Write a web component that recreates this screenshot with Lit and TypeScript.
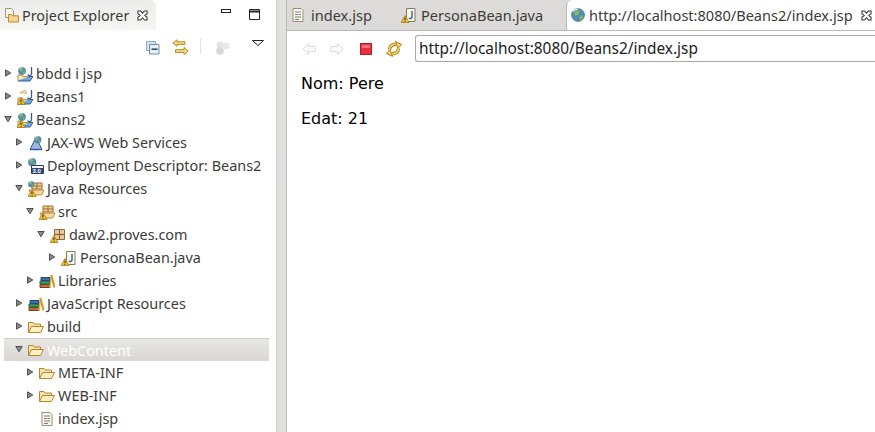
import { LitElement, html, css, svg } from "lit";
import { customElement } from "lit/decorators.js";

const warn = (x = 0, y = 8) => svg`<g transform="translate(${x} ${y})"><path d="M4 .5 8 7.500H0Z" fill="#f4c430" stroke="#a87a10" stroke-width=".8"/><path d="M4 2.600v2.600M4 5.900v.9" stroke="#222" stroke-width="1"/></g>`;
const globe = (x = 0, y = 0, s = 1) => svg`<g transform="translate(${x} ${y}) scale(${s})"><circle cx="5" cy="5" r="4.600" fill="#4d8fb5" stroke="#5a7f96" stroke-width=".6"/><path d="M2 3.200 4.400 1.400 6.400 2.600 5 5 3 5.600ZM6 6l2.400-1L8 8 6.400 8.600Z" fill="#8fb45a"/><path d="M1.600 2.400A4 4 0 0 1 5 .8" stroke="#e8f2f8" fill="none"/></g>`;
const openFolder = svg`<path d="M.5 13.500V3.500h4.500l1.200 1.500h6.300v3" fill="#fbe3a8" stroke="#b9852c"/><path d="M.5 13.500 3.500 7.500H15.500l-3 6Z" fill="#fdf0c8" stroke="#b9852c" stroke-linejoin="round"/>`;
const projectFolder = (blue = true) => svg`<path d="M1 15 4 10.500h12L13 15Z" fill="${blue ? "#6fa8dc" : "#fdeab8"}" stroke="${blue ? "#2f5f94" : "#b98b35"}"/><path d="M1 14.500V9h4l1 1.500h6" fill="#fdeab8" stroke="#b98b35"/><path d="M14.500 1v6.500a2 2 0 0 1-3.800 1" fill="none" stroke="#2f5f94" stroke-width="1.300"/>`;
const pkgBox = svg`<path d="M4 2h10v6H4Z" fill="#f2cf95" stroke="#9a6a2c"/><path d="M9 2v6M4 5h10" stroke="#9a6a2c"/><path d="M1 9h15l-2.500 5H3.500Z" fill="#f7d9a0" stroke="#b98b35"/>`;
const books = svg`<path d="M1 11.500h10v3H1Z" fill="#c9683a" stroke="#70401f"/><path d="M1 8h10v3H1Z" fill="#3f9a63" stroke="#24603b"/><path d="M2 4.500h9v3H2Z" fill="#3b6ea5" stroke="#234a73"/><path d="M12.200 2 15.600 14.500" stroke="#d99a1f" stroke-width="2.200"/><path d="M10.800 14.500 12.400 6" stroke="#e8b84a" stroke-width="1.400"/>`;
const javaFile = svg`<path d="M5.500 1.500h8.500v13H5.500Z" fill="#f7f5ee" stroke="#8c7a52"/><path d="M11 4v6.200a1.600 1.600 0 0 1-3 .5" fill="none" stroke="#2f5f94" stroke-width="1.400"/>`;
const refreshHalf = svg`<path d="M2.500 8.500C3 5 5.500 3.200 9 3.200" fill="none" stroke="#a87a10" stroke-width="3.400"/><path d="M2.500 8.500C3 5 5.500 3.200 9 3.200" fill="none" stroke="#f5d060" stroke-width="1.800"/><path d="M8.500 .6 14.600 3.500 10.800 7.500Z" fill="#f5d060" stroke="#a87a10" stroke-width=".9" stroke-linejoin="round"/>`;

const icons: Record<string, unknown> = {
  web: svg`${projectFolder(true)}${globe(1, 1, .8)}`,
  webWarn1: svg`${projectFolder(true)}<path d="M4 3 8 1 10 4H3Z" fill="#fdeab8" stroke="#b98b35" stroke-width=".6"/>${warn(0, 8)}`,
  webWarn2: svg`${projectFolder(true)}${globe(1, 1, .8)}${warn(0, 8)}`,
  jaxws: svg`<path d="M2 14.500 6.200 6h3.600l4.200 8.500Z" fill="#9db8e0" stroke="#34569c"/><path d="M2 14.500h12" stroke="#34569c" stroke-width="1.400"/>${globe(6, 1, .75)}`,
  deploy: svg`${globe(0, 0, .85)}<path d="M3.500 7.500h12v8h-12Z" fill="#f4f6fa" stroke="#27406e"/><path d="M4 10h11v5H4Z" fill="#33476e"/><text x="4.400" y="14.700" font-size="6" font-weight="700" fill="#fff" font-family="Liberation Sans">3.0</text>`,
  javaRes: svg`${pkgBox}${globe(0, 0, .65)}${warn(0, 8)}`,
  src: svg`${pkgBox}${warn(0, 8)}`,
  pkg: svg`<path d="M4.500 2.500h10v10h-10Z" fill="#e6c8a0" stroke="#8f6a3c"/><path d="M9.500 2.500v10M4.500 7.500h10" stroke="#8f5a30"/>${warn(0, 8)}`,
  java: svg`${javaFile}${warn(0, 8)}`,
  lib: books,
  folder: openFolder,
  jsp: svg`<path d="M3 1.500h8l2 2v11H3Z" fill="#faf8ef" stroke="#9a8f70"/><path d="M5 5h6" stroke="#6a7f9a"/><path d="M5 7.500h3" stroke="#b06060"/><path d="M8.500 7.500H11" stroke="#6a7f9a"/><path d="M5 10h6" stroke="#5f8f5f"/><path d="M5 12.500h4" stroke="#6a7f9a"/>`,
  explorer: svg`<path d="M2.500 1.500h6l2 2v7h-8Z" fill="#f7f5ee" stroke="#a39a80"/><path d="M5.500 15V7.500h3l1.200 1.300h5.800V15Z" fill="#f6d58e" stroke="#b98b35"/>`,
};

const icon = (name: string) => html`<svg class="ic" width="16" height="16" viewBox="0 0 16 16">${icons[name]}</svg>`;

const closeX = html`<svg class="x" width="11" height="11" viewBox="0 0 12 12"><path d="M1 1h3l2 2.500L8 1h3v3L8.500 6 11 8v3H8L6 8.500 4 11H1V8l2.500-2L1 4Z" fill="#fff" stroke="#333" stroke-width="1.100"/></svg>`;

type Row = { t: string; l: number; i: string; a?: "r" | "d"; sel?: boolean };
const rows: Row[] = [
  { t: "bbdd i jsp", l: 0, i: "web", a: "r" },
  { t: "Beans1", l: 0, i: "webWarn1", a: "r" },
  { t: "Beans2", l: 0, i: "webWarn2", a: "d" },
  { t: "JAX-WS Web Services", l: 1, i: "jaxws", a: "r" },
  { t: "Deployment Descriptor: Beans2", l: 1, i: "deploy", a: "r" },
  { t: "Java Resources", l: 1, i: "javaRes", a: "d" },
  { t: "src", l: 2, i: "src", a: "d" },
  { t: "daw2.proves.com", l: 3, i: "pkg", a: "d" },
  { t: "PersonaBean.java", l: 4, i: "java", a: "r" },
  { t: "Libraries", l: 2, i: "lib", a: "r" },
  { t: "JavaScript Resources", l: 1, i: "lib", a: "r" },
  { t: "build", l: 1, i: "folder", a: "r" },
  { t: "WebContent", l: 1, i: "folder", a: "d", sel: true },
  { t: "META-INF", l: 2, i: "folder", a: "r" },
  { t: "WEB-INF", l: 2, i: "folder", a: "r" },
  { t: "index.jsp", l: 2, i: "jsp" },
];

@customElement("app-root")
export class AppRoot extends LitElement {
  static styles = css`
    :host { display: block; width: 875px; height: 432px; overflow: hidden; background: #fff;
      font-family: "Noto Sans", "Open Sans", sans-serif; font-size: 14.4px; color: #3c3b37; }
    .app { display: grid; grid-template-columns: 276px 11px 1fr; height: 432px; }
    .gutter { background: #e2e0de; border-left: 1px solid #cfcdca; border-right: 1px solid #bdbbb8; }
    .left { display: flex; flex-direction: column; min-width: 0; }
    .lhead { display: flex; height: 30px; }
    .ltab { width: 156px; flex: none; background: linear-gradient(#ececeb, #f6f6f5); display: flex; align-items: center;
      padding: 0 0 0 3px; box-sizing: border-box; border-radius: 0 6px 0 0; white-space: nowrap; }
    .ltab .ic { margin-right: 3px; }
    .x { flex: none; display: block; }
    .ltab .x { margin-left: 8px; }
    .winbtns { flex: 1; display: flex; padding: 9px 18px 0 65px; gap: 18px; align-items: flex-start; }
    .ltools { height: 32px; display: flex; align-items: flex-start; padding: 9px 0 0 146px; box-sizing: border-box; }
    .ltools svg { display: block; flex: none; }
    .tree { display: flex; flex-direction: column; }
    .row { height: 23px; display: flex; align-items: center; margin: 0 7px 0 4px; white-space: nowrap; box-sizing: border-box; }
    .row.sel { background: linear-gradient(#e9e7e4, #d9d7d3); border-top: 1px solid #cfcdca; color: #fff; }
    .arrow { width: 8px; height: 8px; flex: none; margin: -2px 5px 0 0; }
    .ic { flex: none; margin-right: 3px; display: block; }
    .right { display: flex; flex-direction: column; min-width: 0; }
    .tabs { display: flex; background: #dddbd9; border-bottom: 1px solid #b9b7b4; box-sizing: border-box; height: 31px; font-size: 14.55px; }
    .tab { display: flex; align-items: center; white-space: nowrap; height: 30px; box-sizing: border-box; }
    .t1 { width: 107px; padding-left: 3px; }
    .t1 .ic { margin-right: 5px; }
    .t2 { width: 172px; padding-left: 7px; }
    .t2 .ic { margin-right: 4px; }
    .t3 { flex: 1; min-width: 0; background: #fff; border-radius: 6px 0 0 0; border-left: 1px solid #b9b7b4; padding-left: 3px; }
    .t3 .x { margin-left: 8px; }
    .t3 .ic { margin-right: 3px; }
    .tools { height: 35px; display: flex; align-items: center; padding: 0 0 1px 15px; box-sizing: border-box; border-top: 1px solid #fff; }
    .tools svg { flex: none; display: block; }
    .url { flex: 1; min-width: 0; height: 27px; border: 1px solid #aaa8a5; border-right: 0; border-radius: 3px 0 0 3px; box-sizing: border-box;
      padding-left: 3px; display: flex; align-items: center; color: #222; white-space: nowrap; margin-left: 13px; background: #fff; font-size: 15.4px; }
    .page { padding: 8px 0 0 14px; font-family: "DejaVu Sans", sans-serif; font-size: 16px; color: #000; }
    .page p { margin: 0 0 16px; line-height: 19px; }
  `;

  arrow(a?: string) {
    if (!a) return html`<span class="arrow"></span>`;
    return html`<svg class="arrow" viewBox="0 0 8 8">${a === "r"
      ? svg`<path d="M1.500 .8 6.800 4 1.500 7.200Z" fill="#8a8a88" stroke="#444" stroke-width=".9"/>`
      : svg`<path d="M.8 1.500h6.400L4 6.800Z" fill="#8a8a88" stroke="#444" stroke-width=".9"/>`}</svg>`;
  }

  render() {
    return html`<div class="app">
      <section class="left">
        <div class="lhead">
          <div class="ltab">${icon("explorer")}<span>Project Explorer</span>${closeX}</div>
          <div class="winbtns">
            <svg width="10" height="5" viewBox="0 0 10 5"><rect x=".5" y=".5" width="9" height="3" fill="#fff" stroke="#222"/></svg>
            <svg width="11" height="11" viewBox="0 0 11 11"><path d="M.5.5h10v10H.5Z" fill="#fff" stroke="#222"/><path d="M1 2.500h9" stroke="#222" stroke-width="2"/></svg>
          </div>
        </div>
        <div class="ltools">
          <svg width="14" height="14" viewBox="0 0 14 14" style="margin-top:2px"><path d="M.5.5h9v9h-9Z" fill="#d6e3f0" stroke="#8fa9c2"/><path d="M3.500 3.500h9.500v9.500H3.500Z" fill="#e9f0f7" stroke="#6f90ad"/><path d="M5.500 8.200h6" stroke="#1d4f7c" stroke-width="1.600"/></svg>
          <svg width="17" height="17" viewBox="0 0 17 17" style="margin-left:12px"><path d="M.8 4 5 .8v2h8v2.600H5v1.800Z" fill="#f5d98b" stroke="#b98a1e"/><path d="M16.200 12 12 15.500v-2H3.500v-2.800H12V8.500Z" fill="#f5d98b" stroke="#b98a1e"/></svg>
          <svg width="1" height="16" style="margin:-1px 0 0 11px"><rect width="1" height="16" fill="#e4e3e1"/></svg>
          <svg width="15" height="14" viewBox="0 0 15 14" style="margin:2px 0 0 14px"><circle cx="5" cy="4" r="3.500" fill="#e2e2e1"/><circle cx="11" cy="5" r="3.500" fill="#e8e8e7"/><circle cx="5" cy="10" r="3.800" fill="#d8d8d7"/></svg>
          <svg width="12" height="6" viewBox="0 0 12 6" style="margin:1px 0 0 22px"><path d="M.5.5h11L6 5.500Z" fill="#fff" stroke="#222"/></svg>
        </div>
        <div class="tree">
          ${rows.map((r) => html`<div class="row ${r.sel ? "sel" : ""}" style="padding-left:${r.l * 11}px">
            ${this.arrow(r.a)}${icon(r.i)}<span>${r.t}</span></div>`)}
        </div>
      </section>
      <div class="gutter"></div>
      <section class="right">
        <div class="tabs">
          <div class="tab t1">${icon("jsp")}<span>index.jsp</span></div>
          <div class="tab t2">${icon("java")}<span>PersonaBean.java</span></div>
          <div class="tab t3">
            <svg class="ic" width="16" height="16" viewBox="0 0 16 16">${globe(1, 1, 1.4)}</svg>
            <span>http://localhost:8080/Beans2/index.jsp</span>${closeX}
          </div>
        </div>
        <div class="tools">
          <svg width="14" height="14" viewBox="0 0 14 14"><path d="M.7 7 6.500 1.500v3h7v5h-7v3Z" fill="#fafafa" stroke="#dcdcdb"/></svg>
          <svg width="14" height="14" viewBox="0 0 14 14" style="margin-left:14px"><path d="M13.300 7 7.500 1.500v3h-7v5h7v3Z" fill="#fafafa" stroke="#dcdcdb"/></svg>
          <svg width="12" height="12" viewBox="0 0 12 12" style="margin-left:16px"><rect x=".5" y=".5" width="11" height="11" fill="#e8303c" stroke="#b5202c"/><rect x="2" y="2" width="8" height="3" fill="#f2707a"/></svg>
          <svg width="16" height="16" viewBox="0 0 16 16" style="margin-left:14px">
            <g transform="translate(1 0)">${refreshHalf}</g>
            <g transform="rotate(180 8 8) translate(1 0)">${refreshHalf}</g>
          </svg>
          <div class="url">http://localhost:8080/Beans2/index.jsp</div>
        </div>
        <div class="page"><p>Nom: Pere</p><p>Edat: 21</p></div>
      </section>
    </div>`;
  }
}
